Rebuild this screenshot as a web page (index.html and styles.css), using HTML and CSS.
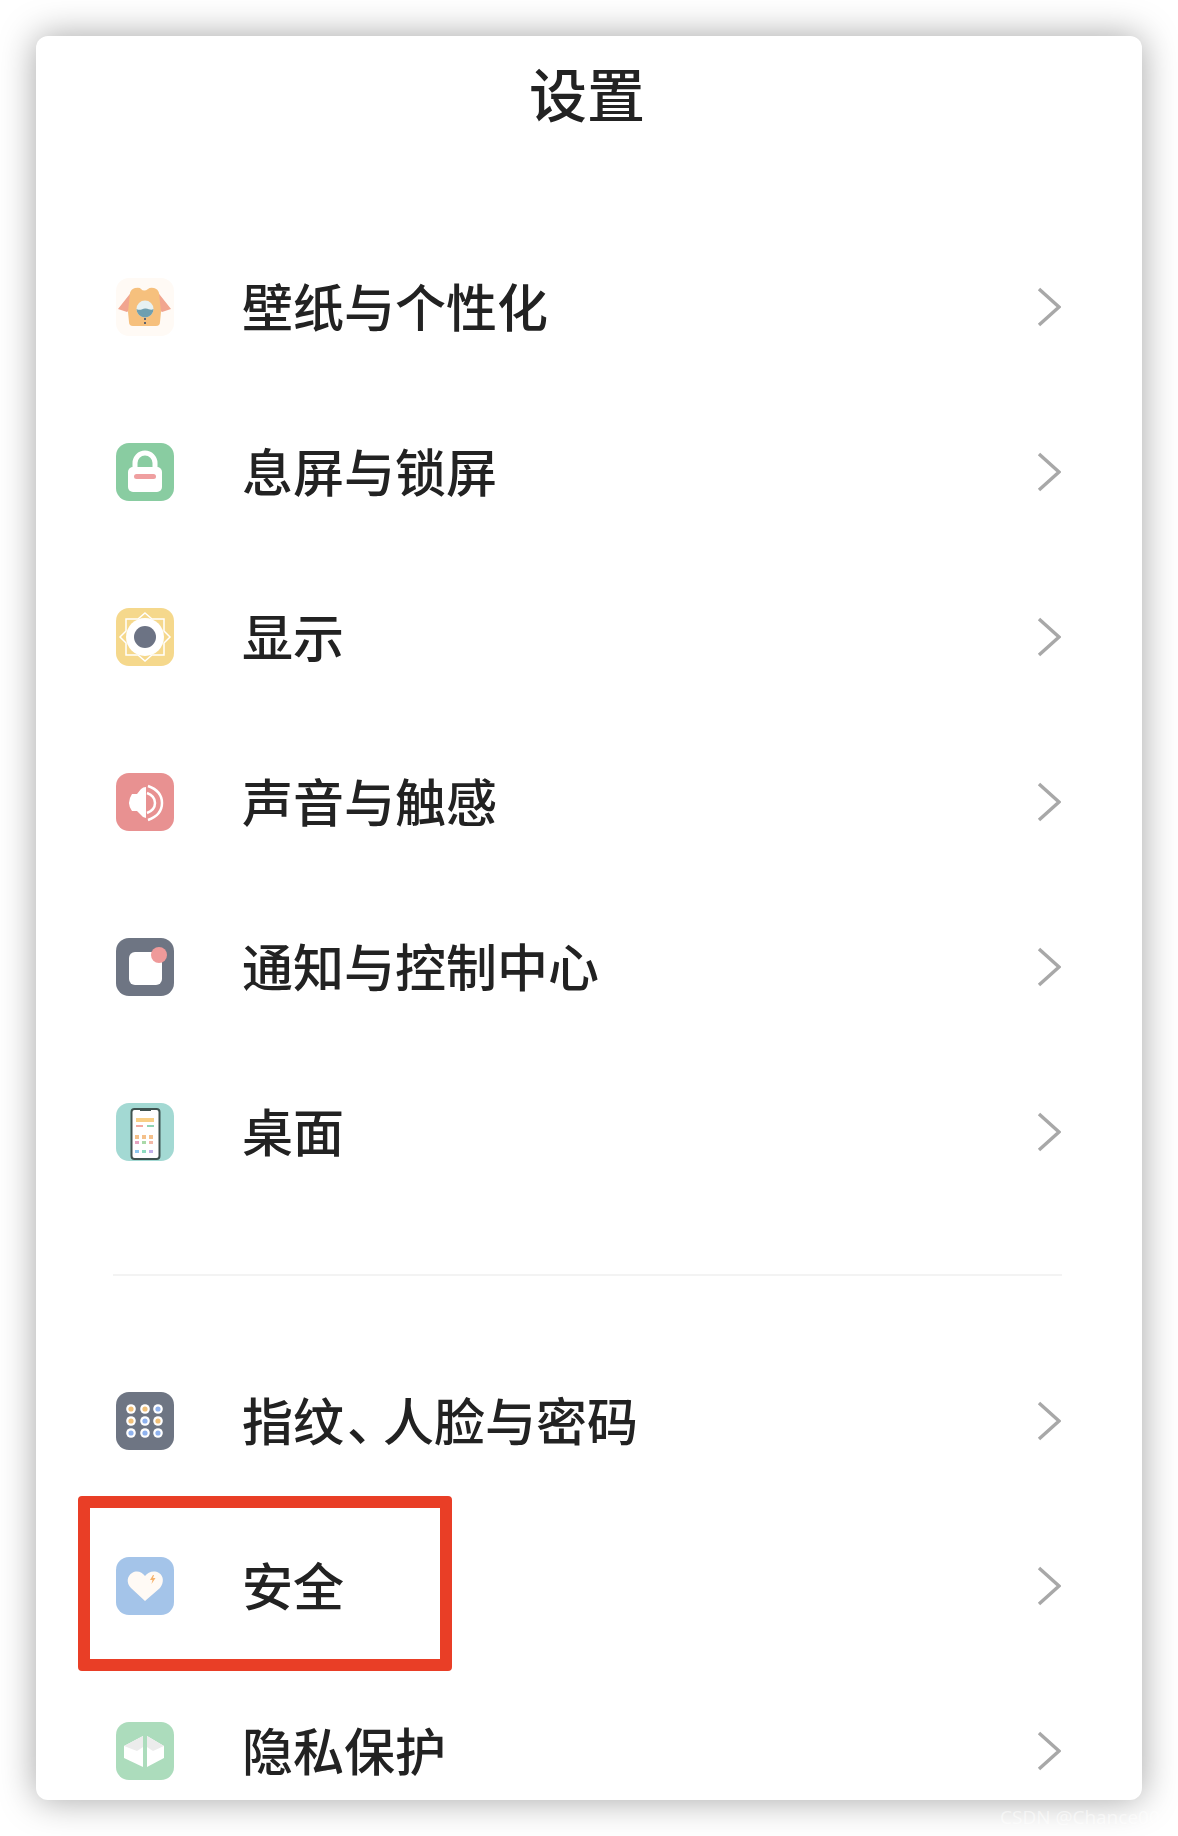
FILE: index.html
```html
<!DOCTYPE html>
<html lang="zh-CN">
<head>
<meta charset="utf-8">
<title>设置</title>
<link rel="stylesheet" href="styles.css">
</head>
<body>
<div class="frame">
  <main class="card">
    <h1 class="title">设置</h1>
    <ul class="group">
      <li class="row">
        <svg class="icon" viewBox="0 0 58 58"><rect width="58" height="58" rx="13" fill="#fffaf5"/><path d="M17 12 2 31l9 3 6-5zM40 12l15 19-9 3-6-5z" fill="#f1a58f"/><path d="M12 34 14 15q1-4 5-5 5-1 6 1 3 3 7 0 2-2 6-1 4 1 5 5l2 19-1 10q0 4-4 4H17q-4 0-4-4z" fill="#f6c07d"/><circle cx="29" cy="31" r="8.500" fill="#e6f1f2"/><path d="M20.500 31a8.500 8.500 0 0 0 17 0c-3 2-5-1-8.500-.5-3 .5-5 2.500-8.500.5z" fill="#6f9fb0"/><path d="M29 40v7" stroke="#5f6470" stroke-width="2" stroke-dasharray="2 2"/></svg>
        <span class="label">壁纸与个性化</span>
        <svg class="chev" viewBox="0 0 24 40"><path d="M2 2l20 18L2 38"/></svg>
      </li>
      <li class="row">
        <svg class="icon" viewBox="0 0 58 58"><rect width="58" height="58" rx="13" fill="#89cca1"/><path d="M19 27v-7a10 10 0 0 1 20 0v7" fill="none" stroke="#fff" stroke-width="5"/><rect x="12" y="24" width="34" height="25" rx="5" fill="#fff"/><rect x="18" y="31" width="22" height="5" rx="2.500" fill="#ef9fa0"/></svg>
        <span class="label">息屏与锁屏</span>
        <svg class="chev" viewBox="0 0 24 40"><path d="M2 2l20 18L2 38"/></svg>
      </li>
      <li class="row">
        <svg class="icon" viewBox="0 0 58 58"><rect width="58" height="58" rx="13" fill="#f5d88c"/><path d="M29 5l7 6h12v12l6 6-6 6v12H36l-7 6-7-6H10V35l-6-6 6-6V11h12z" fill="none" stroke="#fff" stroke-width="1.500"/><circle cx="29" cy="29" r="19" fill="#fff"/><circle cx="29" cy="29" r="11" fill="#6c7384"/></svg>
        <span class="label">显示</span>
        <svg class="chev" viewBox="0 0 24 40"><path d="M2 2l20 18L2 38"/></svg>
      </li>
      <li class="row">
        <svg class="icon" viewBox="0 0 58 58"><rect width="58" height="58" rx="13" fill="#e89191"/><path d="M30 14v31q-3 0-5-3l-4-4h-5q-6-8 0-17h5l4-5q2-2 5-2z" fill="#fff"/><path d="M31 20q8 3 8 10t-8 10" fill="none" stroke="#fff" stroke-width="2.500"/><path d="M32 13q14 5 14 17t-14 17" fill="none" stroke="#fff" stroke-width="2.500"/></svg>
        <span class="label">声音与触感</span>
        <svg class="chev" viewBox="0 0 24 40"><path d="M2 2l20 18L2 38"/></svg>
      </li>
      <li class="row">
        <svg class="icon" viewBox="0 0 58 58"><rect width="58" height="58" rx="13" fill="#6e7583"/><rect x="13" y="14" width="33" height="33" rx="6" fill="#fff"/><circle cx="43" cy="17" r="8" fill="#ef9a9a"/></svg>
        <span class="label">通知与控制中心</span>
        <svg class="chev" viewBox="0 0 24 40"><path d="M2 2l20 18L2 38"/></svg>
      </li>
      <li class="row">
        <svg class="icon" viewBox="0 0 58 58"><rect width="58" height="58" rx="13" fill="#a3d9d3"/><rect x="15.500" y="6" width="28" height="50" rx="3" fill="#fff" stroke="#3f5350" stroke-width="2"/><rect x="24" y="5" width="11" height="3" fill="#3f5350"/><rect x="20" y="15" width="18" height="4" fill="#f8cf86"/><rect x="20" y="22" width="7" height="2" fill="#f2a9a0"/><rect x="31" y="22" width="7" height="2" fill="#8fd4b4"/><g fill="#f4c08a"><rect x="19" y="32" width="4" height="4"/><rect x="26" y="32" width="4" height="4"/><rect x="33" y="32" width="4" height="4"/></g><g fill="#e5a3c0"><rect x="19" y="38" width="4" height="3"/><rect x="33" y="38" width="4" height="3" fill="#f3b9a7"/></g><rect x="26" y="38" width="4" height="3" fill="#a9d9a8"/><rect x="19" y="47" width="4" height="3" fill="#8fc8ee"/><rect x="26" y="47" width="4" height="3" fill="#8fdcc0"/><rect x="33" y="47" width="4" height="3" fill="#c4b0ea"/></svg>
        <span class="label">桌面</span>
        <svg class="chev" viewBox="0 0 24 40"><path d="M2 2l20 18L2 38"/></svg>
      </li>
    </ul>
    <hr class="divider">
    <ul class="group">
      <li class="row">
        <svg class="icon" viewBox="0 0 58 58"><rect width="58" height="58" rx="13" fill="#6e7583"/><g fill="#fff"><circle cx="15" cy="17" r="4.800"/><circle cx="29" cy="17" r="4.800"/><circle cx="42" cy="17" r="4.800"/><circle cx="15" cy="29" r="4.800"/><circle cx="29" cy="29" r="4.800"/><circle cx="42" cy="29" r="4.800"/><circle cx="15" cy="41" r="4.800"/><circle cx="29" cy="41" r="4.800"/><circle cx="42" cy="41" r="4.800"/></g><g fill="#f1c078"><circle cx="15" cy="17" r="2.600"/><circle cx="29" cy="17" r="2.600"/><circle cx="15" cy="29" r="2.600"/><circle cx="42" cy="29" r="2.600"/></g><g fill="#8fb2ee"><circle cx="42" cy="17" r="2.600"/><circle cx="29" cy="29" r="2.600"/><circle cx="15" cy="41" r="2.600"/><circle cx="29" cy="41" r="2.600"/><circle cx="42" cy="41" r="2.600"/></g></svg>
        <span class="label">指纹<span class="comma">、</span>人脸与密码</span>
        <svg class="chev" viewBox="0 0 24 40"><path d="M2 2l20 18L2 38"/></svg>
      </li>
      <li class="row">
        <svg class="icon" viewBox="0 0 58 58"><rect width="58" height="58" rx="13" fill="#a4c4e9"/><path d="M29 44 15 31c-5-5-4-12 1-15s10-1 13 3c3-4 9-6 14-3s5 10 1 15z" fill="#fffaf5"/><path d="M37 18l-3 5h2.500l-1 4 4-6h-2.500l1-3z" fill="#f6b26b"/></svg>
        <span class="label">安全</span>
        <svg class="chev" viewBox="0 0 24 40"><path d="M2 2l20 18L2 38"/></svg>
        <div class="highlight"></div>
      </li>
      <li class="row">
        <svg class="icon" viewBox="0 0 58 58"><rect width="58" height="58" rx="13" fill="#acdcbc"/><path d="M27 14v31l-19-9V24z" fill="#fff"/><path d="M31 14v31l17-9V24z" fill="#fff"/><path d="M27 14v11l-6 4-13-5zM31 14v11l6 4 11-5z" fill="#ececec"/></svg>
        <span class="label">隐私保护</span>
        <svg class="chev" viewBox="0 0 24 40"><path d="M2 2l20 18L2 38"/></svg>
      </li>
    </ul>
  </main>
  <div class="watermark">CSDN @Chance00</div>
</div>
</body>
</html>
```

FILE: styles.css
```css
* {
  box-sizing: border-box;
}

html,
body {
  margin: 0;
  background: #fff;
}

.frame {
  position: relative;
  width: 1178px;
  height: 1836px;
  padding: 36px;
  overflow: hidden;
}

.card {
  height: 1764px;
  padding: 0 80px;
  background: #fff;
  border-radius: 12px;
  box-shadow: 0 0 36px rgba(0, 0, 0, 0.36);
  overflow: hidden;
  font-family: "Noto Sans CJK SC", "Noto Sans", sans-serif;
  color: #222;
}

.title {
  margin: 0 0 68px;
  padding-right: 4px;
  height: 120px;
  line-height: 112px;
  text-align: center;
  font-size: 58px;
  font-weight: 500;
  filter: blur(0.5px);
}

.group {
  margin: 0;
  padding: 0;
  list-style: none;
}

.row {
  position: relative;
  display: flex;
  align-items: center;
  height: 165px;
}

.icon {
  flex: none;
  width: 58px;
  height: 58px;
  filter: blur(0.6px);
}

.label {
  flex: 1;
  margin: 0 0 4px 68px;
  font-size: 51px;
  font-weight: 500;
  line-height: 60px;
  filter: blur(0.5px);
}

.comma {
  letter-spacing: -12px;
  padding-left: 3px;
  margin-right: -3px;
}

.chev {
  flex: none;
  width: 24px;
  height: 40px;
  margin-right: 1px;
  fill: none;
  stroke: #a8a8a8;
  stroke-width: 3.5;
  filter: blur(0.5px);
}

.divider {
  height: 2px;
  margin: 60px 0 62px -3px;
  border: 0;
  background: #f3f3f3;
}

.highlight {
  position: absolute;
  left: -38px;
  top: -7px;
  width: 374px;
  height: 175px;
  border: 12px solid #e93e26;
  border-radius: 4px;
}

.watermark {
  position: absolute;
  left: 1000px;
  top: 1804px;
  font-family: "Open Sans", sans-serif;
  font-size: 19px;
  color: rgba(255, 255, 255, 0.55);
  white-space: nowrap;
}
```
